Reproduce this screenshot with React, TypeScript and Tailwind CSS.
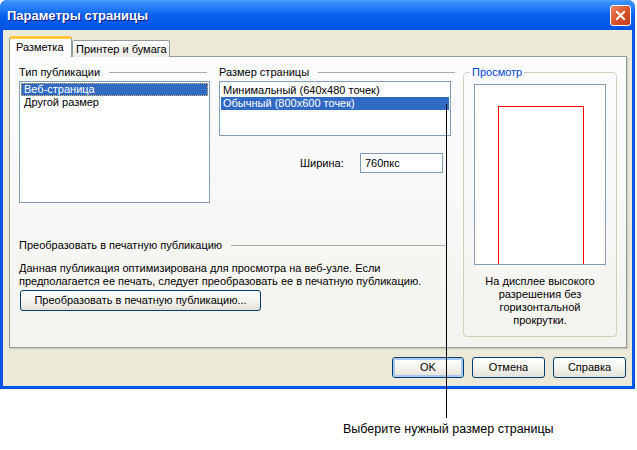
import { X } from 'lucide-react';

function XpButton({ label, focused = false, className = '' }: { label: string; focused?: boolean; className?: string }) {
  return (
    <div
      className={`h-[21px] rounded-[3px] border border-[#003C74] bg-gradient-to-b from-[#FFFFFF] via-[#F5F4EF] to-[#E3E1D8] flex items-center ${className}`}
    >
      <div
        className={`w-full h-full rounded-[2px] flex items-center justify-center ${
          focused ? 'border-2 border-[#A8C8F4]' : 'border border-transparent'
        }`}
      >
        {label}
      </div>
    </div>
  );
}

function SectionLabel({ text, lineClass }: { text: string; lineClass: string }) {
  return (
    <div className="flex items-center h-[13px]">
      <span className="whitespace-nowrap">{text}</span>
      <div className={`h-px bg-[#AAA9A4] ${lineClass}`} />
    </div>
  );
}

export default function App() {
  return (
    <div className="relative w-[637px] h-[450px] bg-white overflow-hidden font-['Liberation_Sans',Arial,sans-serif] text-[11px] leading-[13px] text-black">
      {/* dialog window */}
      <div className="w-[635px] h-[389px] flex flex-col rounded-t-[7px] overflow-hidden bg-[#0055EA]">
        {/* title bar */}
        <div className="h-[30px] shrink-0 flex items-center justify-between pl-[7px] pr-[4px] bg-gradient-to-b from-[#3D95FF] via-[#0A5FEF] to-[#0053E1] border-t border-[#4C9CFF]">
          <span className="text-white font-bold text-[13px] [text-shadow:1px_1px_0_#0A1883]">
            Параметры страницы
          </span>
          <div className="w-[21px] h-[21px] rounded-[3px] border border-white bg-gradient-to-br from-[#E98762] via-[#D9532C] to-[#C33C18] flex items-center justify-center">
            <X size={15} strokeWidth={3} className="text-white" />
          </div>
        </div>

        {/* body */}
        <div className="flex-1 mx-[3px] mb-[3px] bg-[#ECE9D8] flex flex-col pl-[6px] pr-[5px] pt-[6px]">
          {/* tabs */}
          <div className="flex items-end h-[21px] relative z-10">
            <div className="w-[63px] h-[21px] bg-[#FCFCFE] border-x border-[#919B9C] rounded-t-[3px] border-t-[3px] border-t-[#FFC83C] pl-[6px] pt-[2px]">
              Разметка
            </div>
            <div className="w-[98px] h-[17px] bg-gradient-to-b from-white to-[#ECEBE6] border border-b-0 border-[#919B9C] rounded-t-[2px] pl-[3px] pt-[2px]">
              Принтер и бумага
            </div>
          </div>

          {/* tab panel */}
          <div className="h-[292px] -mt-px border border-[#919B9C] bg-gradient-to-b from-[#FCFCFE] to-[#F4F3EE] shadow-[1px_1px_0_#D0CEBF,2px_2px_0_#E3E0D0] flex gap-[8px] pl-[9px] pr-[8px] pt-[9px] pb-[10px]">
            {/* left column */}
            <div className="w-[436px] flex flex-col">
              <div className="flex gap-[9px]">
                <div className="w-[191px] flex flex-col">
                  <SectionLabel text="Тип публикации" lineClass="ml-[9px] w-[98px]" />
                  <div className="mt-[2px] h-[122px] border border-[#7F9DB9] bg-white p-px">
                    <div className="h-[13px] bg-[#316AC5] text-white border border-dotted border-[#E8B860] pl-[2px] leading-[11px]">
                      Веб-страница
                    </div>
                    <div className="h-[13px] pl-[3px]">Другой размер</div>
                  </div>
                </div>
                <div className="w-[236px] flex flex-col">
                  <SectionLabel text="Размер страницы" lineClass="ml-[9px] w-[137px]" />
                  <div className="mt-[2px] h-[55px] w-[232px] border border-[#7F9DB9] bg-white p-px pt-[2px]">
                    <div className="h-[13px] pl-[2px]">Минимальный (640x480 точек)</div>
                    <div className="h-[13px] bg-[#316AC5] text-white pl-[2px]">Обычный (800x600 точек)</div>
                  </div>
                  <div className="mt-[17px] flex items-center">
                    <span className="ml-[81px] w-[60px]">Ширина:</span>
                    <div className="w-[83px] h-[20px] border border-[#7F9DB9] bg-white flex items-center pl-[4px]">
                      760пкс
                    </div>
                  </div>
                </div>
              </div>

              <div className="mt-[36px]">
                <SectionLabel text="Преобразовать в печатную публикацию" lineClass="ml-[9px] w-[215px]" />
              </div>
              <p className="mt-[10px]">
                Данная публикация оптимизирована для просмотра на веб-узле. Если
                <br />
                предполагается ее печать, следует преобразовать ее в печатную публикацию.
              </p>
              <XpButton
                label="Преобразовать в печатную публикацию..."
                className="mt-[2px] ml-px w-[241px]"
              />
            </div>

            {/* preview group */}
            <fieldset className="w-[154px] border border-[#D0D0BF] rounded-[4px] pb-[10px]">
              <legend className="ml-[6px] px-[2px] text-[#0046D5] leading-[13px]">Просмотр</legend>
              <div className="mx-[10px] mt-[5px] h-[181px] w-[132px] border border-[#7F9DB9] bg-white pt-[21px] pl-[23px]">
                <div className="w-[86px] h-full border-[#FF0000] [border-width:1.5px_1.5px_0_1.5px] border-solid" />
              </div>
              <p className="mt-[10px] text-center">
                На дисплее высокого
                <br />
                разрешения без
                <br />
                горизонтальной
                <br />
                прокрутки.
              </p>
            </fieldset>
          </div>

          {/* dialog buttons */}
          <div className="mt-[9px] flex justify-end gap-[8px] pr-px">
            <XpButton label="OK" focused className="w-[72px]" />
            <XpButton label="Отмена" className="w-[73px]" />
            <XpButton label="Справка" className="w-[73px]" />
          </div>
        </div>
      </div>

      {/* callout */}
      <div className="absolute left-[446px] top-[104px] w-px h-[314px] bg-black" />
      <div className="absolute left-[343px] top-[421px] text-[12.5px] leading-[16px]">
        Выберите нужный размер страницы
      </div>
    </div>
  );
}
